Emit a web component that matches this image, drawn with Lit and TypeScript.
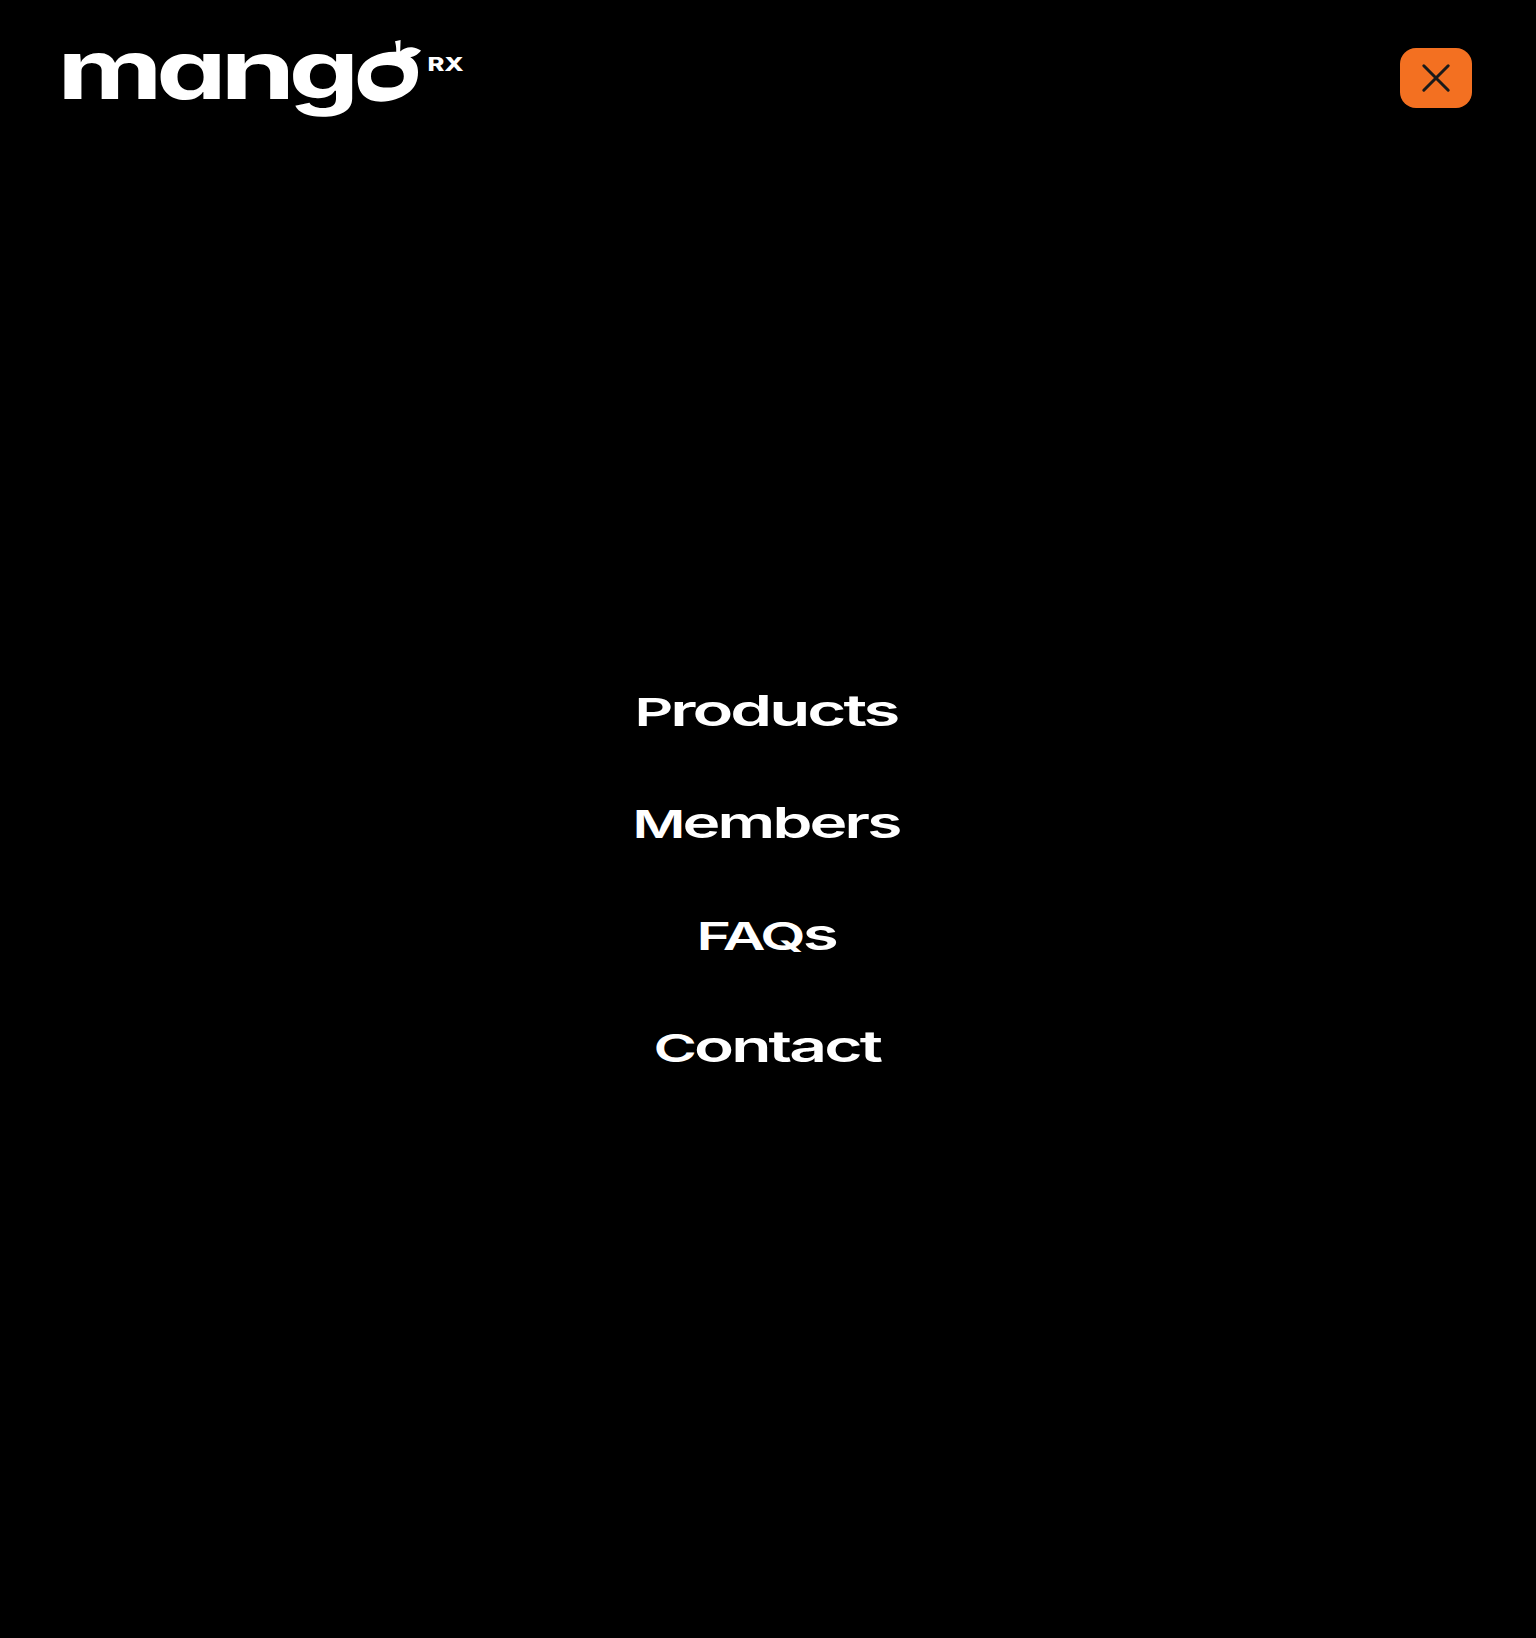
import { LitElement, html, svg, css } from "lit";
import { customElement, state } from "lit/decorators.js";

interface MenuItem {
  caps: string;
  rest: string;
  left: number;
  width: number;
}

// Offsets and widths inside a 300-unit wide label box.
const MENU: MenuItem[] = [
  { caps: "P", rest: "roducts", left: 16.5, width: 263 },
  { caps: "M", rest: "embers", left: 14.5, width: 267 },
  { caps: "FAQ", rest: "s", left: 78.5, width: 139.5 },
  { caps: "C", rest: "ontact", left: 35.5, width: 226.5 },
];

const WORDMARK = [
  { glyph: "m", left: 57.2, width: 105.4 },
  { glyph: "a", left: 156.2, width: 70.4 },
  { glyph: "n", left: 220.2, width: 75.3 },
  { glyph: "g", left: 288.8, width: 70.4 },
];

@customElement("mango-logo")
export class MangoLogo extends LitElement {
  static styles = css`
    :host {
      display: block;
      width: 402px;
      height: 80px;
    }
    .logo {
      display: block;
      fill: #fff;
      overflow: visible;
    }
    .word {
      font: 660 82px Inter, "Liberation Sans", sans-serif;
      font-feature-settings: "cv11";
    }
    .suffix {
      font: 800 18.5px Inter, "Liberation Sans", sans-serif;
    }
  `;

  render() {
    return html`
      <svg class="logo" width="402" height="80" viewBox="64 38 402 80" role="img" aria-label="mango RX">
        ${WORDMARK.map(
          (l) => svg`<text class="word" x=${l.left} y="98.7" textLength=${l.width} lengthAdjust="spacingAndGlyphs">${l.glyph}</text>`
        )}
        <path
          fill-rule="evenodd"
          d="M395 41.2L400.6 40L400.2 51.6C403 48.8 407.5 46.9 412 47.3C415.5 47.7 418.5 49 421 50.6C418.5 53.8 415.5 56.4 410.3 57.2C415.8 60.5 418 65.5 418 72C418 81.5 414.5 88.5 407.5 93.3C400.5 98.2 391.5 101.7 381 101.7C366 101.7 357.7 93 357.7 79.5C357.7 69.5 362.5 62 371.5 57.2C379.5 53 388 51.6 396.2 51.8C396.4 48 396 45 395 41.2ZM387.4 65C376.5 65 371 68.5 371 76.2C371 84 376.5 87.5 387.4 87.5C398.3 87.5 403.8 84 403.8 76.2C403.8 68.5 398.3 65 387.4 65Z"
        />
        <text class="suffix" x="427.4" y="71.2" textLength="36.4" lengthAdjust="spacingAndGlyphs">RX</text>
      </svg>
    `;
  }
}

@customElement("app-root")
export class AppRoot extends LitElement {
  static styles = css`
    :host {
      display: block;
    }
    .page {
      box-sizing: border-box;
      display: flex;
      flex-direction: column;
      height: 1638px;
      background: #000;
      color: #fff;
      font-family: Inter, "Liberation Sans", sans-serif;
    }
    .header {
      display: flex;
      justify-content: space-between;
      align-items: center;
      padding: 38px 64px 0;
      height: 80px;
    }
    .close {
      display: flex;
      align-items: center;
      justify-content: center;
      width: 72px;
      height: 60px;
      padding: 0;
      border: 0;
      border-radius: 16px;
      background: #f37021;
      cursor: pointer;
    }
    .cross {
      stroke: #1a1a1a;
      stroke-width: 3;
      stroke-linecap: round;
      fill: none;
    }
    .menu {
      display: flex;
      flex-direction: column;
      align-items: center;
      padding-top: 538px;
    }
    .link {
      display: flex;
      height: 112px;
      color: inherit;
      text-decoration: none;
    }
    .label {
      display: block;
      fill: currentColor;
      font: 600 38.5px Inter, "Liberation Sans", sans-serif;
      letter-spacing: -1.9px;
    }
    .lower {
      font-size: 43px;
    }
  `;

  @state() private open = true;

  render() {
    return html`
      <div class="page">
        <header class="header">
          <mango-logo></mango-logo>
          <button class="close" aria-label="Toggle menu" @click=${() => (this.open = !this.open)}>
            <svg class="cross" width="30" height="30" viewBox="0 0 30 30">
              <path d="M2.8 2.8L27.2 27.2M27.2 2.8L2.8 27.2" />
            </svg>
          </button>
        </header>
        ${this.open
          ? html`<nav class="menu">
              ${MENU.map(
                (m) => html`<a class="link" href="#">
                  <svg class="label" width="300" height="112" viewBox="0 0 300 112">
                    <text x=${m.left} y="70" textLength=${m.width} lengthAdjust="spacingAndGlyphs">${m.caps}<tspan class="lower">${m.rest}</tspan></text>
                  </svg>
                </a>`
              )}
            </nav>`
          : null}
      </div>
    `;
  }
}
